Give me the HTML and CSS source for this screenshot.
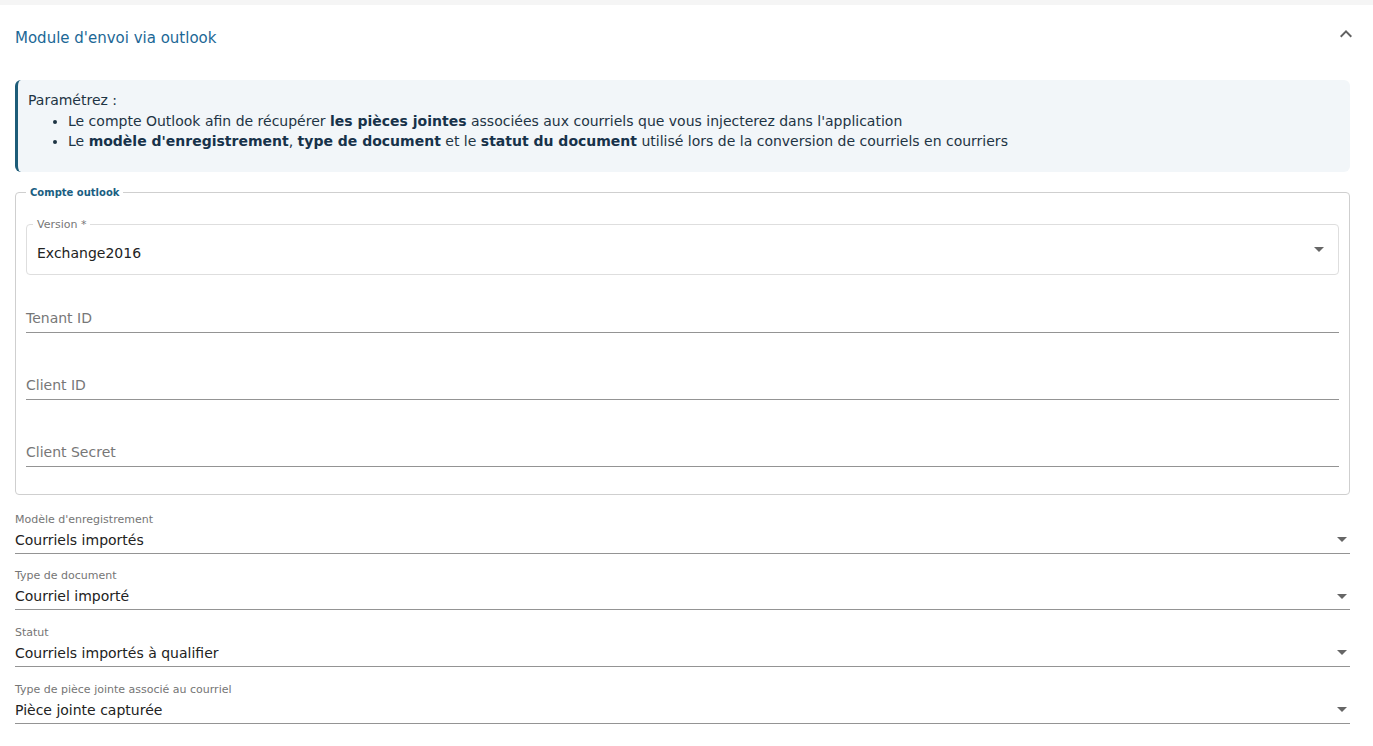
FILE: index.html
```html
<!DOCTYPE html>
<html lang="fr">
<head>
  <meta charset="UTF-8" />
  <meta name="viewport" content="width=device-width, initial-scale=1.0" />
  <title>Module d'envoi via outlook</title>
  <link rel="stylesheet" href="styles.css">
</head>
<body>

<div class="panel">
  <div class="panel-header">
    <span class="panel-title">Module d'envoi via outlook</span>
    <svg class="chevron" width="24" height="24" viewBox="0 0 24 24">
      <path d="M7.4 15.4 12 10.8l4.6 4.6L18 14l-6-6-6 6z" fill="#616161" />
    </svg>
  </div>

  <div class="panel-body">
    <div class="info">
      <div>Paramétrez :</div>
      <ul>
        <li>Le compte Outlook afin de récupérer <b>les pièces jointes</b> associées aux courriels que vous injecterez dans l'application</li>
        <li>Le <b>modèle d'enregistrement</b>, <b>type de document</b> et le <b>statut du document</b> utilisé lors de la conversion de courriels en courriers</li>
      </ul>
    </div>

    <fieldset class="group">
      <legend>Compte outlook</legend>

      <div class="outlined">
        <span class="outlined-label">Version *</span>
        <span class="value outlined-value">Exchange2016</span>
        <span class="arrow outlined-arrow"></span>
      </div>

      <div class="line-field"><span class="placeholder">Tenant ID</span></div>
      <div class="line-field"><span class="placeholder">Client ID</span></div>
      <div class="line-field"><span class="placeholder">Client Secret</span></div>
    </fieldset>

    <div class="select first">
      <div class="select-label">Modèle d'enregistrement</div>
      <div class="select-row"><span class="value">Courriels importés</span><span class="arrow"></span></div>
    </div>
    <div class="select">
      <div class="select-label">Type de document</div>
      <div class="select-row"><span class="value">Courriel importé</span><span class="arrow"></span></div>
    </div>
    <div class="select">
      <div class="select-label">Statut</div>
      <div class="select-row"><span class="value">Courriels importés à qualifier</span><span class="arrow"></span></div>
    </div>
    <div class="select">
      <div class="select-label">Type de pièce jointe associé au courriel</div>
      <div class="select-row"><span class="value">Pièce jointe capturée</span><span class="arrow"></span></div>
    </div>
  </div>
</div>

</body>
</html>
```

FILE: styles.css
```css
body {
  font-family: "DejaVu Sans", Verdana, sans-serif;
  background: #f5f5f5;
  margin: 0;
  padding: 5px 0 0 0;
  color: #222;
}
.panel {
  background: white;
  min-height: 741px;
}
.panel-header {
  display: flex;
  align-items: center;
  justify-content: space-between;
  height: 64px;
  padding: 0 15px 0 15px;
}
.panel-title {
  font-size: 15px;
  color: #1c6896;
  margin-top: 2px;
}
.chevron {
  margin-top: -6px;
}
.panel-body {
  padding: 11px 23px 0 15px;
}
.info {
  background: #f2f6f9;
  border-left: 3px solid #1d5c78;
  border-radius: 6px;
  padding: 10px 12px 20px 10px;
  font-size: 14px;
  line-height: 20.5px;
  color: #1e3444;
}
.info ul {
  margin: 0;
  padding-left: 40px;
}
.info b {
  color: #17324a;
}
.group {
  margin: 15px 0 0 0;
  border: 1px solid #cfcfcf;
  border-radius: 4px;
  padding: 10px 10px 27px 10px;
}
.group legend {
  font-size: 10px;
  font-weight: bold;
  color: #1a5e82;
  padding: 0 4px;
}
.outlined {
  position: relative;
  display: flex;
  align-items: center;
  justify-content: space-between;
  border: 1px solid #dedede;
  border-radius: 4px;
  padding: 4px 14px 0 10px;
  box-sizing: border-box;
  height: 51px;
  margin-top: 16px;
}
.outlined-value {
  margin-top: 4px;
}
.outlined-arrow {
  margin-top: -4px;
}
.outlined-label {
  position: absolute;
  top: -7px;
  left: 6px;
  padding: 0 4px;
  background: white;
  font-size: 11px;
  line-height: 13px;
  color: #777;
}
.value {
  font-size: 14px;
  line-height: 20px;
  color: #222;
}
.arrow {
  width: 0;
  height: 0;
  border-left: 5px solid transparent;
  border-right: 5px solid transparent;
  border-top: 5px solid #666;
}
.line-field {
  border-bottom: 1px solid #949494;
  display: flex;
  align-items: flex-end;
  padding-bottom: 4px;
  box-sizing: border-box;
  height: 57px;
  margin-top: 1px;
}
.line-field + .line-field {
  margin-top: 10px;
}
.placeholder {
  font-size: 14px;
  line-height: 20px;
  color: #777;
}
.select {
  margin-top: 15.7px;
  border-bottom: 1px solid #949494;
  padding-bottom: 3px;
}
.select.first {
  margin-top: 18px;
}
.select-label {
  font-size: 11px;
  line-height: 14px;
  color: #757575;
  margin-bottom: 3px;
}
.select-row {
  display: flex;
  align-items: center;
  justify-content: space-between;
  padding-right: 3px;
}
```
